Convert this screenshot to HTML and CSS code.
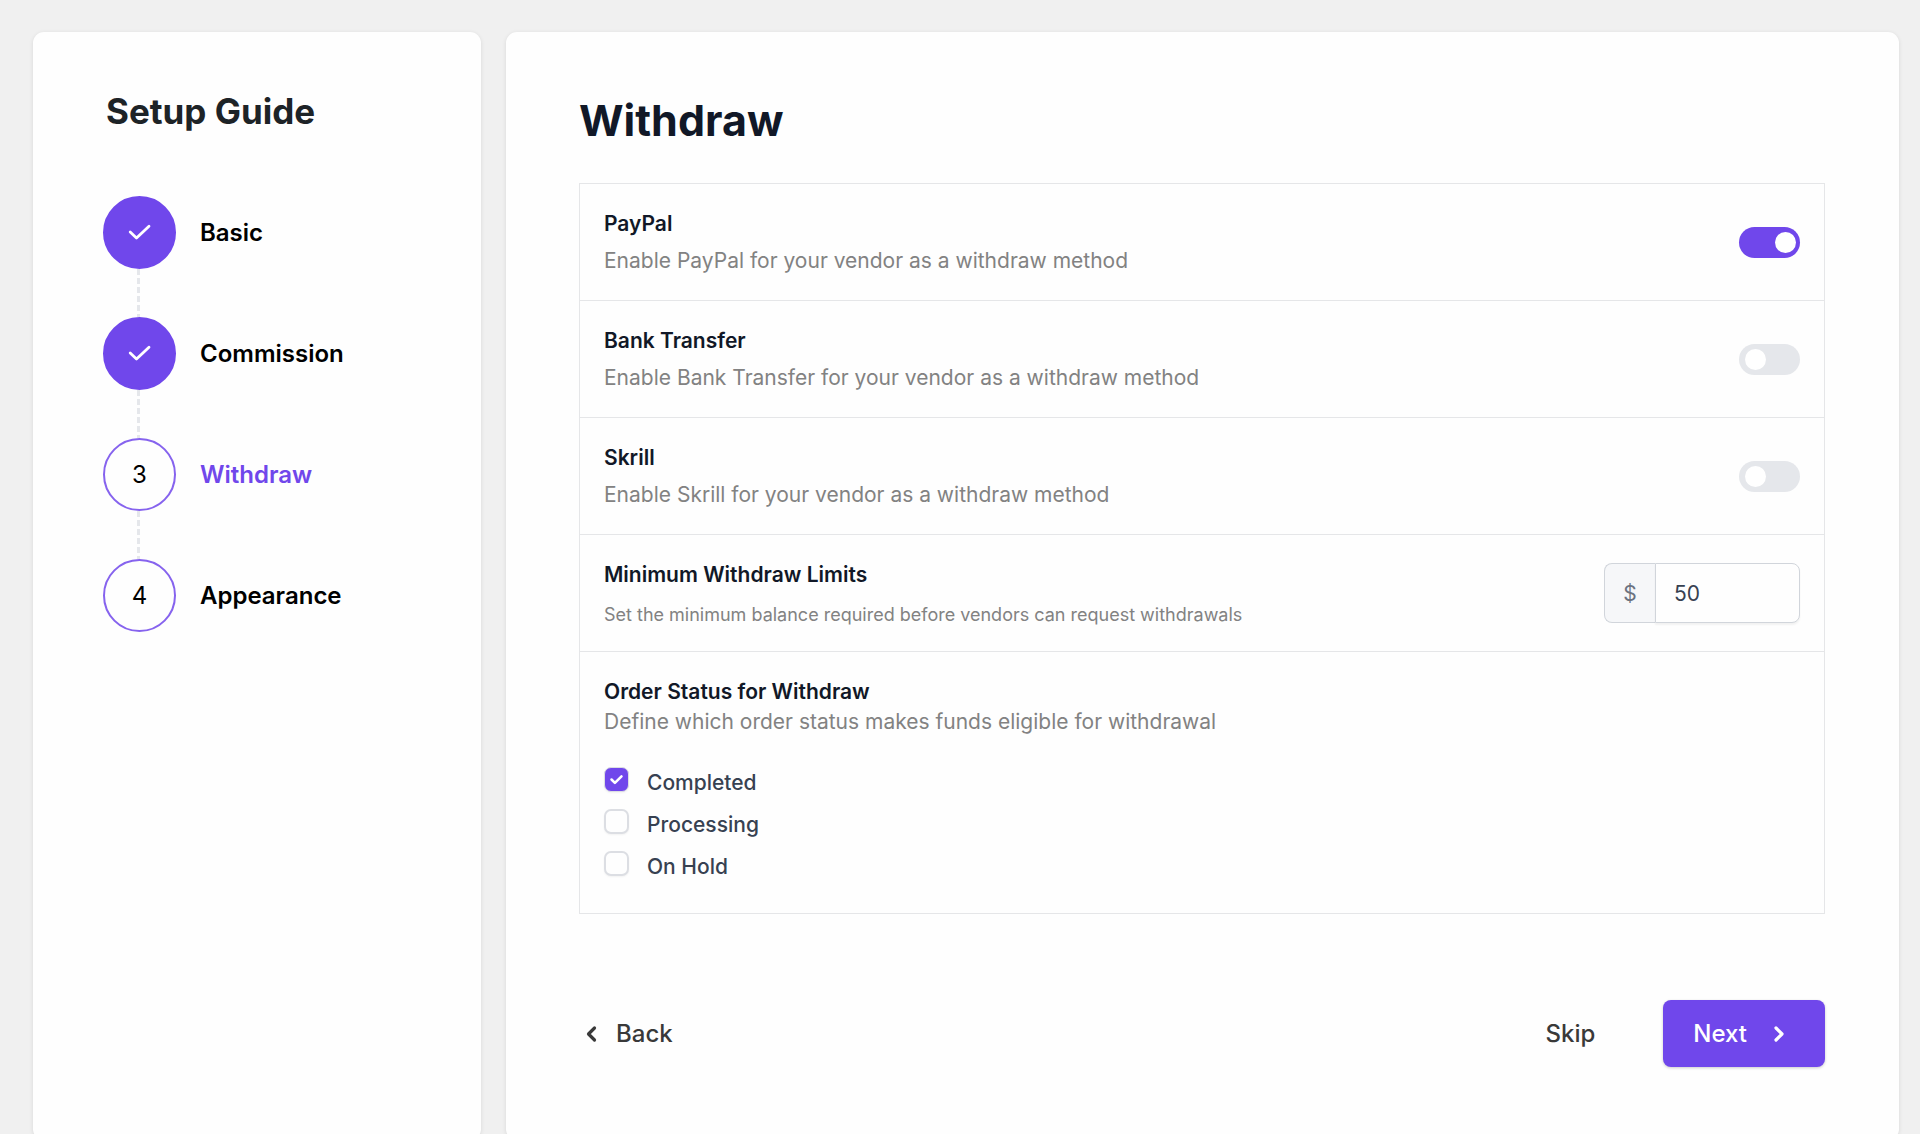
FILE: index.html
```html
<!DOCTYPE html>
<html lang="en">
<head>
    <meta charset="UTF-8" />
    <meta name="viewport" content="width=device-width, initial-scale=1.0" />
    <title>Setup Guide - Withdraw</title>
    <link rel="stylesheet" href="styles.css">
</head>
<body>
    <div class="onboarding">
        <aside class="card sidebar">
            <h2 class="sidebar-title">Setup Guide</h2>
            <ol class="steps">
                <li class="step">
                    <span class="step-circle done">
                        <svg width="24" height="24" viewBox="0 0 24 24" fill="none" stroke="#fff" stroke-width="2.8" stroke-linecap="round" stroke-linejoin="round"><path d="M2.2 11L8.500 17L21 5.200" /></svg>
                    </span>
                    <span class="step-name">Basic</span>
                </li>
                <li class="step">
                    <span class="step-circle done">
                        <svg width="24" height="24" viewBox="0 0 24 24" fill="none" stroke="#fff" stroke-width="2.8" stroke-linecap="round" stroke-linejoin="round"><path d="M2.2 11L8.500 17L21 5.200" /></svg>
                    </span>
                    <span class="step-name">Commission</span>
                </li>
                <li class="step">
                    <span class="step-circle">3</span>
                    <span class="step-name current">Withdraw</span>
                </li>
                <li class="step">
                    <span class="step-circle">4</span>
                    <span class="step-name">Appearance</span>
                </li>
            </ol>
        </aside>

        <main class="card content">
            <h1 class="content-title">Withdraw</h1>

            <form class="settings">
                <div class="row">
                    <div class="row-text">
                        <label class="row-title" for="paypal">PayPal</label>
                        <p class="row-desc">Enable PayPal for your vendor as a withdraw method</p>
                    </div>
                    <input type="checkbox" class="switch" id="paypal" checked />
                </div>
                <div class="row">
                    <div class="row-text">
                        <label class="row-title" for="bank">Bank Transfer</label>
                        <p class="row-desc">Enable Bank Transfer for your vendor as a withdraw method</p>
                    </div>
                    <input type="checkbox" class="switch" id="bank" />
                </div>
                <div class="row">
                    <div class="row-text">
                        <label class="row-title" for="skrill">Skrill</label>
                        <p class="row-desc">Enable Skrill for your vendor as a withdraw method</p>
                    </div>
                    <input type="checkbox" class="switch" id="skrill" />
                </div>
                <div class="row">
                    <div class="row-text">
                        <label class="row-title" for="limit">Minimum Withdraw Limits</label>
                        <p class="row-desc small">Set the minimum balance required before vendors can request withdrawals</p>
                    </div>
                    <div class="amount">
                        <span class="amount-prefix">$</span>
                        <input type="text" class="amount-input" id="limit" value="50" />
                    </div>
                </div>
                <fieldset class="order-status">
                    <legend class="row-title">Order Status for Withdraw</legend>
                    <p class="row-desc">Define which order status makes funds eligible for withdrawal</p>
                    <div class="options">
                        <div class="option">
                            <span class="tick">
                                <input type="checkbox" class="tick-input" id="completed" checked />
                                <svg class="tick-mark" width="17" height="17" viewBox="0 0 16 16" fill="none" stroke="#fff" stroke-width="2.4" stroke-linecap="round" stroke-linejoin="round"><path d="M3.300 8L6.500 11.200L12.700 5" /></svg>
                            </span>
                            <label for="completed">Completed</label>
                        </div>
                        <div class="option">
                            <span class="tick"><input type="checkbox" class="tick-input" id="processing" /></span>
                            <label for="processing">Processing</label>
                        </div>
                        <div class="option">
                            <span class="tick"><input type="checkbox" class="tick-input" id="on-hold" /></span>
                            <label for="on-hold">On Hold</label>
                        </div>
                    </div>
                </fieldset>
            </form>

            <div class="actions">
                <button type="button" class="btn btn-back">
                    <svg width="24" height="24" viewBox="0 0 24 24" fill="none" stroke="currentColor" stroke-width="3.2" stroke-linecap="round" stroke-linejoin="round"><path d="M15.500 6L9.500 12L15.500 18" /></svg>
                    Back
                </button>
                <button type="button" class="btn btn-skip">Skip</button>
                <button type="button" class="btn btn-next">
                    Next
                    <svg width="24" height="24" viewBox="0 0 24 24" fill="none" stroke="currentColor" stroke-width="3.2" stroke-linecap="round" stroke-linejoin="round"><path d="M9 6L15 12L9 18" /></svg>
                </button>
            </div>
        </main>
    </div>
</body>
</html>
```
FILE: styles.css
```css
/* General styles */
* {
    box-sizing: border-box;
}

body {
    margin: 0;
    background: #f0f0f0;
    font-family: Inter, "Liberation Sans", sans-serif;
    font-size: 21px;
    color: #111827;
}

h1, h2, p, ol, fieldset, legend {
    margin: 0;
    padding: 0;
}

.onboarding {
    display: flex;
    gap: 25px;
    padding: 32px 21px 32px 33px;
}

.card {
    background: #fefefe;
    border-radius: 11px;
    box-shadow: 0 1px 4px rgba(0, 0, 0, 0.1);
}

/* Sidebar */
.sidebar {
    flex: 0 0 448px;
    padding: 55px 70px;
}

.sidebar-title {
    padding-left: 3px;
    font-size: 35px;
    line-height: 48px;
    font-weight: 700;
    color: #1d2327;
}

.steps {
    display: flex;
    flex-direction: column;
    gap: 48px;
    margin-top: 61px;
    list-style: none;
}

.step {
    position: relative;
    display: flex;
    align-items: center;
    gap: 24px;
}

/* dashed line down to the next circle */
.step:not(:last-child)::after {
    content: "";
    position: absolute;
    top: 73px;
    left: 34px;
    width: 3px;
    height: 48px;
    background: repeating-linear-gradient(#e5e7eb 0 6px, transparent 6px 9px);
}

.step-circle {
    display: flex;
    align-items: center;
    justify-content: center;
    width: 73px;
    height: 73px;
    border: 2px solid #8663ee;
    border-radius: 50%;
    font-size: 24px;
    color: #000;
}

.step-circle.done {
    border-color: #7047eb;
    background: #7047eb;
}

.step-name {
    font-size: 24px;
    line-height: 32px;
    font-weight: 600;
    color: #000;
}

.step-name.current {
    color: #7047eb;
}

/* Content */
.content {
    flex: 1;
    padding: 60px 74px 73px 73px;
}

.content-title {
    font-size: 43px;
    line-height: 56px;
    font-weight: 700;
}

.settings {
    margin-top: 35px;
    border: 1px solid #e5e6e8;
}

.row {
    display: flex;
    align-items: center;
    justify-content: space-between;
    height: 117px;
    padding: 0 24px;
    border-bottom: 1px solid #e5e6e8;
}

.row-text {
    align-self: flex-start;
    padding-top: 25px;
}

.row-title {
    display: block;
    line-height: 30px;
    font-weight: 600;
}

.row-desc {
    margin-top: 7px;
    line-height: 30px;
    color: #828282;
}

.row-desc.small {
    margin-top: 10px;
    font-size: 18px;
}

.switch {
    appearance: none;
    width: 61px;
    height: 31px;
    margin: 0;
    padding: 5px 6px;
    border-radius: 16px;
    background: #e5e7eb;
    cursor: pointer;
}

.switch::before {
    content: "";
    display: block;
    width: 21px;
    height: 21px;
    border-radius: 50%;
    background: #fff;
}

.switch:checked {
    padding: 5px 4px;
    background: #7047eb;
}

.switch:checked::before {
    margin-left: auto;
}

.amount {
    display: flex;
    width: 196px;
    height: 60px;
}

.amount-prefix {
    display: flex;
    align-items: center;
    justify-content: center;
    width: 51px;
    border: 1px solid #d1d5db;
    border-right: none;
    border-radius: 8px 0 0 8px;
    background: #f6f7f9;
    color: #6b7280;
}

.amount-input {
    flex: 1;
    min-width: 0;
    padding: 0 18px;
    border: 1px solid #d1d5db;
    border-radius: 0 8px 8px 0;
    background: #fefefe;
    box-shadow: 0 2px 2px rgba(0, 0, 0, 0.05);
    font-family: inherit;
    font-size: 21px;
    color: #374151;
}

.order-status {
    min-width: 0;
    padding: 25px 24px 30px;
    border: none;
}

.order-status legend {
    float: left;
    width: 100%;
}

.order-status .row-desc {
    clear: both;
    margin: 0;
}

.options {
    display: flex;
    flex-direction: column;
    gap: 10px;
    margin-top: 30px;
}

.option {
    display: flex;
    gap: 18px;
    line-height: 32px;
    font-weight: 500;
    color: #374151;
}

.tick {
    position: relative;
    width: 25px;
    height: 25px;
}

.tick-input {
    appearance: none;
    display: block;
    width: 25px;
    height: 25px;
    margin: 0;
    border: 2px solid #dcdee3;
    border-radius: 7px;
    background: #fefefe;
    box-shadow: 0 1px 2px rgba(0, 0, 0, 0.05);
}

.tick-input:checked {
    border-width: 1px;
    background: #7047eb;
}

.tick-mark {
    position: absolute;
    top: 4px;
    left: 4px;
    pointer-events: none;
}

/* Footer buttons */
.actions {
    display: flex;
    align-items: center;
    margin-top: 86px;
}

.btn {
    display: flex;
    align-items: center;
    padding: 0;
    border: none;
    background: none;
    font-family: inherit;
    font-size: 24px;
    font-weight: 500;
    color: #393939;
    cursor: pointer;
}

.btn-back {
    gap: 13px;
    margin-right: auto;
}

.btn-next {
    gap: 20px;
    height: 67px;
    margin-left: 68px;
    padding: 0 34px 0 30px;
    border-radius: 8px;
    background: #7047eb;
    box-shadow: 0 1px 3px rgba(0, 0, 0, 0.2);
    color: #fff;
}
```
